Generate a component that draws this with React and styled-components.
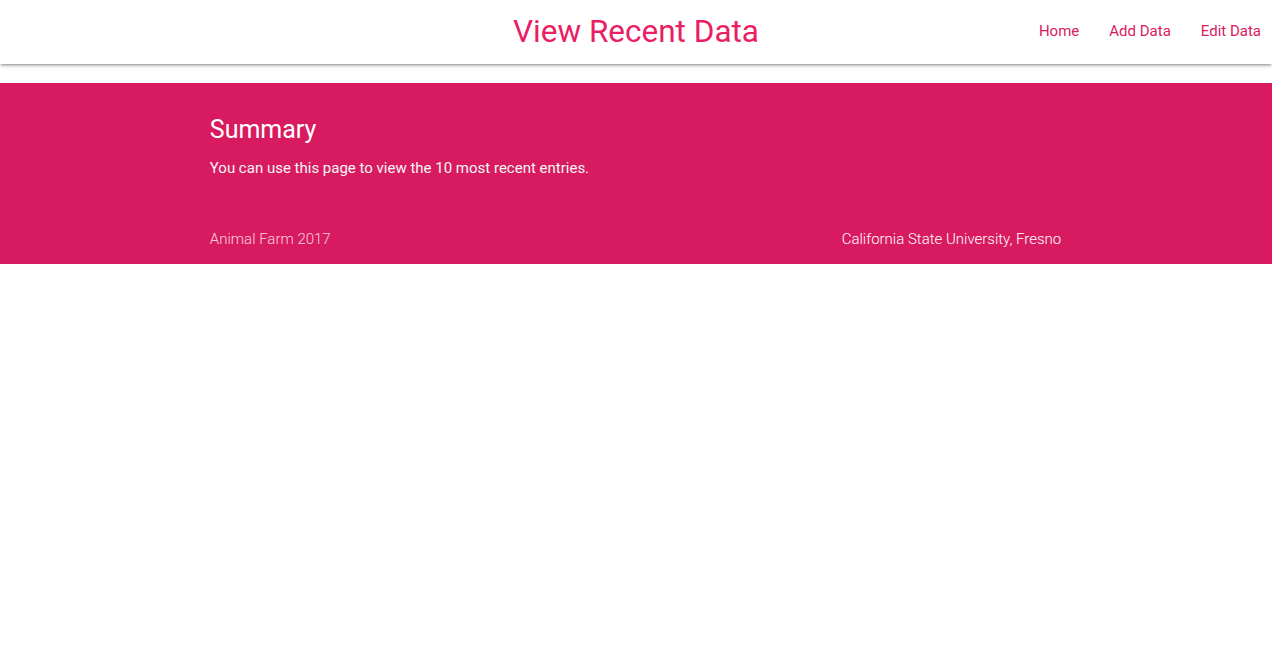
import styled, { createGlobalStyle } from "styled-components";

const GlobalStyle = createGlobalStyle`
  html, body {
    margin: 0;
    padding: 0;
    background: #fff;
    font-family: Roboto, "Noto Sans", sans-serif;
    font-size: 15px;
  }
`;

const Nav = styled.nav`
  height: 64px;
  background: #fff;
  display: flex;
  align-items: center;
  position: relative;
  box-shadow: 0 2px 2px 0 rgba(0, 0, 0, 0.14), 0 3px 1px -2px rgba(0, 0, 0, 0.12),
    0 1px 5px 0 rgba(0, 0, 0, 0.2);
`;

const Brand = styled.a`
  position: absolute;
  left: 50%;
  transform: translateX(-50%);
  font-size: 31.5px;
  line-height: 64px;
  color: #e91e63;
  text-decoration: none;
  white-space: nowrap;
`;

const NavList = styled.ul`
  list-style: none;
  margin: 0 0 0 auto;
  padding: 0 11px 2px 0;
  display: flex;
  gap: 30px;
`;

const NavLink = styled.a`
  display: block;
  font-size: 15px;
  line-height: 62px;
  color: #d81b60;
  text-decoration: none;
`;

const Footer = styled.footer`
  margin-top: 19px;
  background: #d81b60;
  color: #fff;
`;

const Container = styled.div`
  width: 70%;
  margin: 0 auto;
  padding: 0 20px 0 19px;
  box-sizing: border-box;
`;

const Top = styled(Container)`
  padding-top: 20px;
  padding-bottom: 35px;
`;

const Heading = styled.h5`
  margin: 13px 0 0;
  font-size: 25px;
  font-weight: 400;
  line-height: 27px;
`;

const Text = styled.p`
  margin: 14px 0 0;
  font-size: 15px;
  line-height: 22px;
  color: #f5f5f5;
`;

const Copyright = styled(Container)`
  height: 50px;
  display: flex;
  align-items: center;
  justify-content: space-between;
  font-size: 15px;
  font-weight: 300;
`;

const Credit = styled.span`
  color: ${(p) => (p.$faint ? "rgba(255, 255, 255, 0.8)" : "#fff")};
`;

export default function App() {
  return (
    <>
      <GlobalStyle />
      <Nav>
        <Brand href="#">View Recent Data</Brand>
        <NavList>
          <li><NavLink href="#">Home</NavLink></li>
          <li><NavLink href="#">Add Data</NavLink></li>
          <li><NavLink href="#">Edit Data</NavLink></li>
        </NavList>
      </Nav>
      <Footer>
        <Top>
          <Heading>Summary</Heading>
          <Text>You can use this page to view the 10 most recent entries.</Text>
        </Top>
        <Copyright>
          <Credit $faint>Animal Farm 2017</Credit>
          <Credit>California State University, Fresno</Credit>
        </Copyright>
      </Footer>
    </>
  );
}
